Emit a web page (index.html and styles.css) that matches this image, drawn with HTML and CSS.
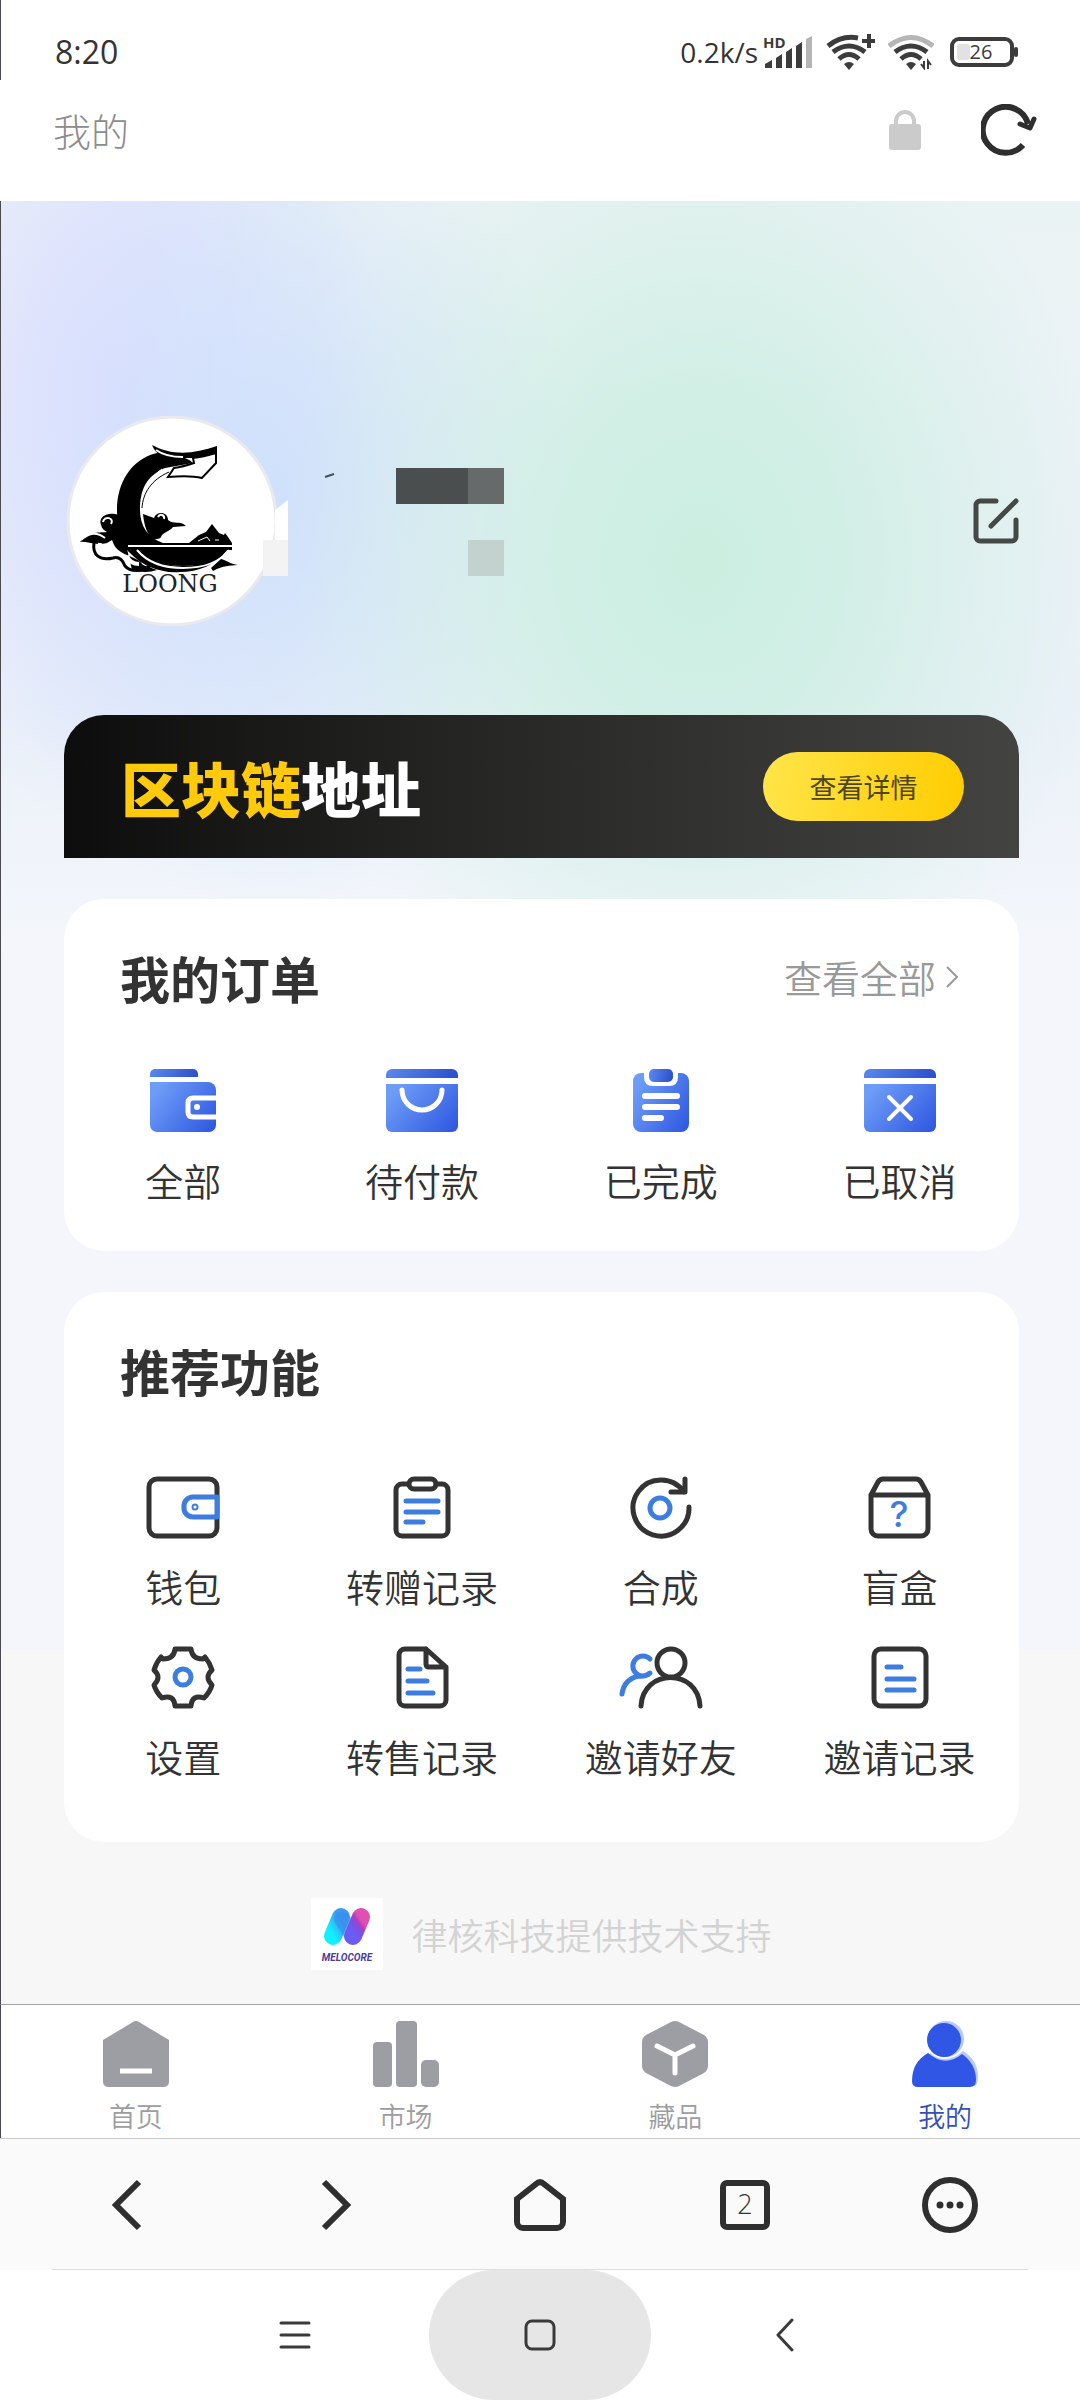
FILE: index.html
```html
<!DOCTYPE html>
<html lang="zh-CN">
<head>
<meta charset="utf-8">
<meta name="viewport" content="width=device-width, initial-scale=1">
<title>我的</title>
<link rel="stylesheet" href="styles.css">
</head>
<body>
<svg class="defs" aria-hidden="true">
  <defs>
    <linearGradient id="blue" x1="0" y1="0.3" x2="1" y2="0.9"><stop offset="0" stop-color="#6e9df8"/><stop offset="1" stop-color="#3058e0"/></linearGradient>
    <linearGradient id="flap" x1="0" y1="0" x2="1" y2="0.1"><stop offset="0" stop-color="#5c89f0"/><stop offset="1" stop-color="#2d52cc"/></linearGradient>
    <linearGradient id="cyan" x1="0" y1="1" x2="0.7" y2="0"><stop offset="0" stop-color="#12f0ff"/><stop offset="1" stop-color="#3d9df2"/></linearGradient>
    <linearGradient id="pink" x1="0.2" y1="1" x2="0.8" y2="0"><stop offset="0" stop-color="#6a5cf5"/><stop offset="0.5" stop-color="#7d4fe0"/><stop offset="0.75" stop-color="#b93cbb"/><stop offset="1" stop-color="#e04fb4"/></linearGradient>
  </defs>
</svg>

<header class="status-bar">
  <time class="clock">8:20</time>
  <div class="status-icons">
    <span class="speed">0.2k/s</span>
    <svg class="signal" width="52" height="40" viewBox="0 0 52 40">
      <text x="1" y="16" class="hd">HD</text>
      <path fill="#3c3c3c" d="M3 36v-4l7-4v8zM14 36V26l6-4v14zM24 36V20l6-4v20zM34 36V14l6-4v26z"/>
      <path fill="#b5b5b5" d="M44 36V7l6-3v32z"/>
    </svg>
    <svg width="50" height="36" viewBox="0 0 50 36" fill="none" stroke="#3c3c3c" stroke-width="5">
      <path d="M2 12Q16 1 32 4M7 18Q23 6 39 18M13 25Q23 16 33 25"/><path d="M18 30q5-4 10 0l-5 6z" fill="#3c3c3c" stroke="none"/><path d="M36 7h13M43 0v14" stroke-width="4"/>
    </svg>
    <svg width="46" height="36" viewBox="0 0 46 36" fill="none" stroke="#3c3c3c" stroke-width="5">
      <path d="M1 12Q23-5 45 12" stroke="#b5b5b5"/><path d="M7 18Q23 6 39 18M13 25Q23 16 33 25"/><path d="M18 30q5-4 10 0l-5 6z" fill="#3c3c3c" stroke="none"/><path d="M33 30l3 4v-7M43 31l-3-4v8" stroke-width="2"/>
    </svg>
    <svg class="battery" width="70" height="32" viewBox="0 0 70 32">
      <rect x="2" y="3" width="60" height="26" rx="7" fill="none" stroke="#3c3c3c" stroke-width="4"/>
      <rect x="7" y="8" width="13" height="16" rx="3" fill="#e2e2e2"/><rect x="64" y="11" width="4" height="10" rx="2" fill="#3c3c3c"/>
      <text x="31" y="23" text-anchor="middle">26</text>
    </svg>
  </div>
</header>

<header class="title-bar">
  <h1>我的</h1>
  <svg width="32" height="42" viewBox="0 0 32 42"><rect y="15" width="32" height="26" rx="3" fill="#cbcbcb"/><path d="M7 17v-5a9 9 0 0 1 18 0v5" fill="none" stroke="#cbcbcb" stroke-width="4"/></svg>
  <button class="plain" aria-label="刷新"><svg width="56" height="52" viewBox="0 0 56 52" fill="none" stroke="#2e2e2e" stroke-width="6"><path d="M42 41A23 23 0 1 1 47 20"/><path d="M39 20l10 4 4-9" stroke-width="5" stroke-linecap="round" stroke-linejoin="round"/></svg></button>
</header>

<main class="page">
  <section class="profile">
    <svg class="avatar" width="210" height="210" viewBox="0 0 210 210" role="img" aria-label="LOONG">
      <circle cx="105" cy="105" r="104" fill="#fff" stroke="#e9e9ee" stroke-width="3"/>
      <!-- cloud behind the dragon's tail -->
      <path d="M52 99c-12-4-21 2-18 10 1 4 4 6 6 7-10 1-18-1-27 10 7-1 14 4 27 1l5-3c2 5 3 8 9 12 8 5 16 5 22 13l14 5c-8 3-18 2-25 0z"/>
      <path d="M36 106c1-7 12-4 8 2M14 124c9-8 16-8 24-2" fill="none" stroke="#fff" stroke-width="2"/>
      <path d="M27 127c-2 12 6 18 19 15 7-2 10 3 12 8 5 6 17 6 25 0" fill="none" stroke="#000" stroke-width="3"/>
      <path d="M33 127c-1 7 5 10 12 9M60 140c2 5 6 8 12 8" fill="none" stroke="#fff" stroke-width="4"/>
      <!-- dragon body -->
      <path d="M90 37C64 43 50 67 50 94c0 24 6 36 13 43 5 5 11 10 20 14 10 4 20 6 30 5 18 0 36-7 47-22h-8c-11 12-22 16-36 16-17 0-31-6-43-16h92v-7H96c-15-5-23-17-23-33 0-20 6-34 25-42l28-5c-7-7-20-9-36-10z"/>
      <path d="M61 130h104" stroke="#fff" stroke-width="2"/>
      <path d="M73 134h87c-8 10-24 16-44 16-19 0-34-6-43-16z"/>
      <path d="M70 134c10 12 26 18 46 18s37-6 46-18" fill="none" stroke="#fff" stroke-width="2"/>
      <!-- crest and jaw -->
      <path d="M85 29c2 5 5 8 8 10 12 4 23 3 33 3 9-2 17-4 24-4v-8c-23 8-45 10-65-1z"/>
      <path d="M89 34c7 5 16 7 27 7" fill="none" stroke="#fff" stroke-width="2"/>
      <path d="M126 42c8-1 16-3 23-5v10l-14 15c-12-3-23-2-34-1l6-9c7-1 14-3 20-5z" fill="#fff" stroke="#000" stroke-width="2"/>
      <path d="M96 62C82 70 76 81 75 92c0-15 4-27 20-39" fill="none" stroke="#fff" stroke-width="1"/>
      <path d="M102 56C84 64 76 77 75 92" fill="none" stroke="#000" stroke-width="1"/>
      <!-- inner cloud and pagoda -->
      <path d="M76 98l11 4c2-7 14-7 14 2 6 5 12 0 18 6l-13 1c-4 5-10 5-12 10-2 3-6 1-8 3-6-6-9-15-10-26z"/>
      <path d="M91 101c2-4 7-2 6 2" fill="none" stroke="#fff" stroke-width="2"/>
      <path d="M122 127l10-8 7-3 6-8 7 9 5 2 1-2 3 4 4 6z"/>
      <path d="M131 125l9-4 3 4M148 124h4" fill="none" stroke="#fff" stroke-width="1"/>
      <path d="M144 152l10-9c5 1 9 5 17 6-9 1-14 0-25 6z"/>
      <text x="103" y="176" text-anchor="middle">LOONG</text>
    </svg>
    <svg class="mask" width="241" height="110" viewBox="0 0 241 110" aria-hidden="true">
      <path fill="#fff" d="M12 44L25 34v42H12z"/><path fill="#f3f3f3" d="M0 74h25v36H0z"/>
      <path fill="#4a4e4f" d="M133 2h72v36h-72z"/><path fill="#666a6b" d="M205 2h36v36h-36z"/><path fill="#c4d2cf" d="M205 74h36v36h-36z"/>
      <path d="M62 11l9-3" stroke="#44515a" stroke-width="2"/>
    </svg>
    <button class="plain" aria-label="编辑资料"><svg width="46" height="46" viewBox="0 0 46 46" fill="none" stroke="#444948" stroke-width="5" stroke-linecap="round" stroke-linejoin="round"><path d="M23 3H7a4 4 0 0 0-4 4v32a4 4 0 0 0 4 4h32a4 4 0 0 0 4-4V22M18 28L43 3"/></svg></button>
  </section>

  <section class="banner">
    <h2><span class="gold">区块链</span>地址</h2>
    <button class="detail">查看详情</button>
  </section>

  <section class="card orders">
    <div class="card-head">
      <h2>我的订单</h2>
      <a class="more" href="#orders">查看全部<svg width="14" height="24" viewBox="0 0 14 24" fill="none" stroke="#999" stroke-width="2"><path d="M2 2l10 10L2 22"/></svg></a>
    </div>
    <nav class="grid">
      <a href="#all"><svg width="66" height="63" viewBox="0 0 66 63"><path fill="url(#flap)" d="M0 8V5a5 5 0 0 1 5-5h38a5 5 0 0 1 5 5v3z"/><path fill="url(#blue)" d="M0 13h58a8 8 0 0 1 8 8v35a7 7 0 0 1-7 7H7a7 7 0 0 1-7-7z"/><path d="M66 29H43q-5 0-5 5v9q0 5 5 5h23" fill="none" stroke="#fff" stroke-width="5"/><circle cx="47" cy="38" r="3" fill="#fff"/></svg>全部</a>
      <a href="#unpaid"><svg width="72" height="63" viewBox="0 0 72 63"><path fill="url(#flap)" d="M0 9V6a6 6 0 0 1 6-6h60a6 6 0 0 1 6 6v3z"/><path fill="url(#blue)" d="M0 15h72v42a6 6 0 0 1-6 6H6a6 6 0 0 1-6-6z"/><path d="M16 21a20 20 0 0 0 40 0" fill="none" stroke="#fff" stroke-width="5" stroke-linecap="round"/></svg>待付款</a>
      <a href="#done"><svg width="56" height="63" viewBox="0 0 56 63"><rect y="4" width="56" height="59" rx="8" fill="url(#blue)"/><path fill="#fff" d="M11 3h34v5q0 9-9 9H20q-9 0-9-9z"/><rect x="16" width="24" height="13" rx="5" fill="url(#flap)"/><path d="M12 27h32M12 38h32M12 49h16" stroke="#fff" stroke-width="6" stroke-linecap="round"/></svg>已完成</a>
      <a href="#cancelled"><svg width="72" height="63" viewBox="0 0 72 63"><path fill="url(#flap)" d="M0 9V6a6 6 0 0 1 6-6h60a6 6 0 0 1 6 6v3z"/><path fill="url(#blue)" d="M0 15h72v42a6 6 0 0 1-6 6H6a6 6 0 0 1-6-6z"/><path d="M25 28l22 22M47 28L25 50" stroke="#fff" stroke-width="4" stroke-linecap="round"/></svg>已取消</a>
    </nav>
  </section>

  <section class="card tools">
    <div class="card-head"><h2>推荐功能</h2></div>
    <nav class="grid line-icons">
      <a href="#wallet"><svg width="72" height="61" viewBox="0 0 72 61"><rect x="2" y="2" width="68" height="57" rx="8"/><path fill="#fff" class="accent" d="M70 20H46a9 9 0 0 0-9 10a9 9 0 0 0 9 10h24z"/><circle cx="48" cy="30" r="1" class="accent"/></svg>钱包</a>
      <a href="#gifts"><svg width="56" height="61" viewBox="0 0 56 61"><path d="M14 7H8a6 6 0 0 0-6 6v40a6 6 0 0 0 6 6h40a6 6 0 0 0 6-6V13a6 6 0 0 0-6-6h-6"/><rect x="15" y="2" width="27" height="10" rx="5"/><path class="accent" d="M12 24h32M12 35h32M12 45h17"/></svg>转赠记录</a>
      <a href="#merge"><svg width="61" height="61" viewBox="0 0 61 61"><path d="M59 30A28 28 0 1 1 54 15M55 2v13H41"/><circle class="accent" cx="30" cy="31" r="10"/></svg>合成</a>
      <a href="#blindbox"><svg width="61" height="61" viewBox="0 0 61 61"><path d="M2 18v34a7 7 0 0 0 7 7h43a7 7 0 0 0 7-7V18zM2 18L9 5q2-3 5-3h33q3 0 5 3l7 13"/><text x="30" y="50" text-anchor="middle">?</text></svg>盲盒</a>
      <a href="#settings"><svg width="62" height="61" viewBox="0 0 62 61"><path d="M23 2h16q1 10 12 10l2-2q5 6 7 13-8 7 0 15-2 7-8 13-12-4-13 8H23q-1-12-13-8-6-6-8-13 8-8 0-15 2-7 7-13l2 2Q22 12 23 2z"/><circle class="accent" cx="31" cy="30" r="8"/></svg>设置</a>
      <a href="#resales"><svg width="51" height="61" viewBox="0 0 51 61"><path d="M29 2H8a6 6 0 0 0-6 6v45a6 6 0 0 0 6 6h35a6 6 0 0 0 6-6V20L29 2v15q0 3 3 3h17"/><path class="accent" d="M11 22h12M11 34h19M11 46h25"/></svg>转售记录</a>
      <a href="#invite"><svg width="83" height="61" viewBox="0 0 83 61"><path class="accent" d="M31 12a10 10 0 1 0 0 14q-5 4-11 3Q5 32 3 47"/><circle cx="52" cy="16" r="14"/><path d="M22 59C24 21 79 21 81 59"/></svg>邀请好友</a>
      <a href="#invites"><svg width="56" height="61" viewBox="0 0 56 61"><rect x="2" y="2" width="52" height="57" rx="7"/><path class="accent" d="M15 20h14M15 32h27M15 43h27"/></svg>邀请记录</a>
    </nav>
  </section>

  <footer class="support">
    <svg width="72" height="72" viewBox="0 0 72 72" role="img" aria-label="MELOCORE"><path fill="#fff" d="M0 0h72v72H0z"/><path d="M22 38l8-19" stroke="url(#cyan)" stroke-width="18" stroke-linecap="round"/><path d="M31 21l11 17" stroke="#388cf0" stroke-width="16" stroke-linecap="round" opacity=".6"/><path d="M42 38l8-19" stroke="url(#pink)" stroke-width="18" stroke-linecap="round"/><text x="36" y="63" text-anchor="middle">MELOCORE</text></svg>
    <span>律核科技提供技术支持</span>
  </footer>
</main>

<nav class="tab-bar">
  <a href="#home"><svg width="66" height="66" viewBox="0 0 66 66"><path fill="#9d9da4" d="M0 19L30 1q3-2 6 0l30 18v42a5 5 0 0 1-5 5H5a5 5 0 0 1-5-5z"/><path d="M17 50h32" stroke="#fff" stroke-width="5"/></svg>首页</a>
  <a href="#market"><svg width="66" height="66" viewBox="0 0 66 66" fill="#9d9da4"><rect y="21" width="19" height="45" rx="4"/><rect x="23" width="21" height="66" rx="4"/><rect x="48" y="39" width="18" height="27" rx="5"/></svg>市场</a>
  <a href="#collection"><svg width="66" height="66" viewBox="0 0 66 66"><path fill="#9d9da4" d="M29 1q4-2 8 0l25 13q4 3 4 7v24q0 4-4 7L37 65q-4 2-8 0L4 52q-4-3-4-7V21q0-4 4-7z"/><path d="M15 25l18 9 18-9M33 34v18" fill="none" stroke="#fff" stroke-width="5" stroke-linecap="round"/></svg>藏品</a>
  <a href="#me" class="active" aria-current="page"><svg width="66" height="66" viewBox="0 0 66 66"><g fill="#b8c9ff"><circle cx="34" cy="18" r="18"/><path d="M18 32q16 13 33-2 15 9 15 26 0 7-3 9H18z"/></g><path fill="#2f56e4" d="M16 32q17 15 34 1 14 10 14 26 0 7-6 7H6q-6 0-6-6 0-19 16-28z"/><circle cx="32" cy="19" r="17" fill="#2f56e4"/></svg>我的</a>
</nav>

<nav class="browser-bar">
  <button class="plain" aria-label="后退"><svg width="50" height="56" viewBox="0 0 50 56"><path d="M34 5L11 28l23 23"/></svg></button>
  <button class="plain" aria-label="前进"><svg width="50" height="56" viewBox="0 0 50 56"><path d="M14 5l23 23-23 23"/></svg></button>
  <button class="plain" aria-label="主页"><svg width="54" height="56" viewBox="0 0 54 56"><path d="M4 22L23 7q4-4 8 0l19 15v23a6 6 0 0 1-6 6H10a6 6 0 0 1-6-6z"/></svg></button>
  <button class="plain" aria-label="标签页"><svg width="50" height="56" viewBox="0 0 50 56"><rect x="3" y="6" width="44" height="44" rx="4"/><text x="25" y="37" text-anchor="middle">2</text></svg></button>
  <button class="plain" aria-label="更多"><svg width="56" height="56" viewBox="0 0 56 56"><circle cx="28" cy="28" r="25"/><path d="M18 28h0M28 28h0M38 28h0" stroke-width="7" stroke-linecap="round"/></svg></button>
</nav>

<nav class="system-bar">
  <button class="plain" aria-label="最近任务"><svg width="32" height="34" viewBox="0 0 32 34"><path d="M2 5h28M2 17h28M2 29h28"/></svg></button>
  <button class="plain pressed" aria-label="桌面"><svg width="34" height="34" viewBox="0 0 34 34"><rect x="3" y="3" width="28" height="28" rx="6"/></svg></button>
  <button class="plain" aria-label="返回"><svg width="20" height="34" viewBox="0 0 20 34"><path d="M17 2L3 17l14 15"/></svg></button>
</nav>
</body>
</html>
```
FILE: styles.css
```css
* { box-sizing: border-box; }

body {
  margin: 0;
  background: #fff;
  color: #333;
  font-family: "Noto Sans CJK SC", "Noto Sans", sans-serif;
}

h1, h2 { margin: 0; }
a { color: inherit; text-decoration: none; }
svg { display: block; flex: none; }
.defs { width: 0; height: 0; position: absolute; }

.plain {
  display: flex;
  align-items: center;
  justify-content: center;
  padding: 0;
  border: 0;
  background: none;
}

/* Phone status bar */
.status-bar {
  display: flex;
  align-items: center;
  justify-content: space-between;
  height: 80px;
  padding: 24px 60px 0 54px;
  border-left: 1px solid #4a4a50;
}
.clock { font: 32px/56px "Open Sans", sans-serif; }
.status-icons { display: flex; align-items: center; gap: 12px; }
.speed { font: 28px/56px "Open Sans", sans-serif; }
.signal { margin-left: -8px; }
.hd { font: 700 15px "Open Sans", sans-serif; fill: #3c3c3c; }
.battery { margin-left: 4px; }
.battery text { font: 20px "Open Sans", sans-serif; fill: #3c3c3c; }

/* Browser title bar */
.title-bar {
  display: flex;
  align-items: center;
  gap: 60px;
  height: 121px;
  padding: 0 43px 22px 53px;
}
.title-bar h1 {
  flex: 1;
  color: #8c8c8c;
  font-size: 38px;
  font-weight: 300;
  line-height: 56px;
}

/* Page */
.page {
  padding: 215px 61px 34px 63px;
  border-left: 1px solid #4a4a50;
  background:
    radial-gradient(410px 500px at 700px 360px, #cbeee1 0, #cbeee1c8 35%, #cbeee150 72%, #cbeee100 100%),
    radial-gradient(300px 420px at 270px 290px, #cfe1fb 0, #cfe1fb90 45%, #cfe1fb00 100%),
    radial-gradient(260px 440px at 120px 190px, #dcdeff 0, #dcdeffa0 45%, #dcdeff00 100%),
    linear-gradient(#eaf3f4 0, #eaf1f8 500px, #f4f6fb 760px, #f5f6fc 1448px, #f7f7f7 1449px);
}

.profile {
  position: relative;
  display: flex;
  align-items: center;
  justify-content: space-between;
  padding-left: 3px;
}
.avatar text { font: 24px "DejaVu Serif", serif; fill: #222; }
.mask { position: absolute; left: 199px; top: 50px; }

.banner {
  display: flex;
  align-items: center;
  justify-content: space-between;
  height: 143px;
  margin-top: 89px;
  padding: 0 55px 0 57px;
  border-radius: 40px 40px 0 0;
  background: linear-gradient(90deg, #0d0d0d, #242422 40%, #434341);
}
.banner h2 {
  color: #fff;
  font-size: 60px;
  font-weight: 900;
  line-height: 64px;
}
.banner .gold { color: #ffca0c; }
.detail {
  width: 201px;
  height: 69px;
  padding: 0;
  border: 0;
  border-radius: 35px;
  background: linear-gradient(100deg, #ffe54a, #ffcc00);
  color: #4d4620;
  font: 27px/40px "Noto Sans CJK SC", sans-serif;
}

.card {
  margin-top: 41px;
  border-radius: 40px;
  background: #fff;
}
.orders { padding: 50px 0 47px; }
.tools { padding: 50px 0 62px; }
.card-head {
  display: flex;
  align-items: center;
  justify-content: space-between;
  padding: 0 60px 0 56px;
}
.card-head h2 {
  font-size: 50px;
  font-weight: 700;
  line-height: 56px;
}
.more {
  display: flex;
  align-items: center;
  gap: 9px;
  color: #999;
  font-size: 38px;
  font-weight: 350;
  line-height: 48px;
}

.grid {
  display: grid;
  grid-template-columns: repeat(4, 1fr);
  row-gap: 37px;
  margin-top: 64px;
}
.grid a {
  display: flex;
  flex-direction: column;
  align-items: center;
  gap: 24px;
  font-size: 38px;
  font-weight: 350;
  line-height: 48px;
}
.line-icons { margin-top: 79px; }
.line-icons svg {
  overflow: visible;
  fill: none;
  stroke: #333;
  stroke-width: 5;
  stroke-linecap: round;
  stroke-linejoin: round;
}
.line-icons .accent { stroke: #3e7de0; }
.line-icons text { font: 500 36px Inter, sans-serif; fill: #3e7de0; stroke: none; }

.support {
  display: flex;
  align-items: center;
  justify-content: center;
  gap: 28px;
  margin-top: 56px;
  color: #d3d3d3;
  font-size: 36px;
  font-weight: 350;
  line-height: 48px;
}
.support text { font: italic 700 10px Roboto, sans-serif; fill: #4b3d9c; }

/* App tabs */
.tab-bar {
  display: grid;
  grid-template-columns: repeat(4, 1fr);
  padding: 16px 0 2px;
  border-top: 1px solid #a4a4a4;
  border-left: 1px solid #4a4a50;
}
.tab-bar a {
  display: flex;
  flex-direction: column;
  align-items: center;
  gap: 9px;
  color: #9d9da0;
  font-size: 27px;
  font-weight: 350;
  line-height: 40px;
}
.tab-bar .active { color: #3550b8; }

/* Browser toolbar */
.browser-bar {
  display: grid;
  grid-template-columns: repeat(5, 1fr);
  height: 132px;
  padding: 0 27px;
  border-top: 1px solid #c8c8c8;
  background: linear-gradient(#dedede, #dedede) center bottom / 976px 1px no-repeat, #fafafa;
}
.browser-bar svg { fill: none; stroke: #2f2f2f; stroke-width: 6; }
.browser-bar text { font: 300 27px "Open Sans", sans-serif; fill: #333; stroke: none; }

/* System navigation */
.system-bar {
  display: grid;
  grid-template-columns: repeat(3, 222px);
  column-gap: 23px;
  justify-content: center;
  height: 130px;
}
.system-bar svg { fill: none; stroke: #3a3a3a; stroke-width: 3; stroke-linecap: round; stroke-linejoin: round; }
.system-bar .pressed { border-radius: 65px; background: #e6e6e6; }
```
